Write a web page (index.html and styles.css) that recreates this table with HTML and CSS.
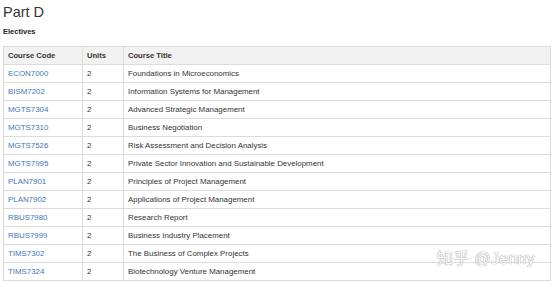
FILE: index.html
```html
<!DOCTYPE html>
<html>
<head>
<meta charset="utf-8">
<link rel="stylesheet" href="styles.css">
</head>
<body>
<div class="page">
  <h1 class="title">Part D</h1>
  <h2 class="subtitle">Electives</h2>
  <table class="courses">
    <thead>
      <tr><th class="c-code">Course Code</th><th class="c-units">Units</th><th>Course Title</th></tr>
    </thead>
    <tbody>
      <tr><td><a>ECON7000</a></td><td>2</td><td>Foundations in Microeconomics</td></tr>
      <tr><td><a>BISM7202</a></td><td>2</td><td>Information Systems for Management</td></tr>
      <tr><td><a>MGTS7304</a></td><td>2</td><td>Advanced Strategic Management</td></tr>
      <tr><td><a>MGTS7310</a></td><td>2</td><td>Business Negotiation</td></tr>
      <tr><td><a>MGTS7526</a></td><td>2</td><td>Risk Assessment and Decision Analysis</td></tr>
      <tr><td><a>MGTS7995</a></td><td>2</td><td>Private Sector Innovation and Sustainable Development</td></tr>
      <tr><td><a>PLAN7901</a></td><td>2</td><td>Principles of Project Management</td></tr>
      <tr><td><a>PLAN7902</a></td><td>2</td><td>Applications of Project Management</td></tr>
      <tr><td><a>RBUS7980</a></td><td>2</td><td>Research Report</td></tr>
      <tr><td><a>RBUS7999</a></td><td>2</td><td>Business Industry Placement</td></tr>
      <tr><td><a>TIMS7302</a></td><td>2</td><td>The Business of Complex Projects</td></tr>
      <tr><td><a>TIMS7324</a></td><td>2</td><td>Biotechnology Venture Management</td></tr>
    </tbody>
  </table>
  <div class="watermark">知乎 @Jenny</div>
</div>
</body>
</html>
```
FILE: styles.css
```css
html, body {
  margin: 0;
  padding: 0;
  background: #fff;
}
body {
  font-family: "Liberation Sans", Arial, "Noto Sans CJK SC", sans-serif;
  color: #333;
}
.page {
  position: relative;
  padding: 0 3px;
  width: 548px;
  height: 283px;
}
.title {
  margin: 0;
  padding-top: 2px;
  font-size: 14.5px;
  font-weight: normal;
  line-height: 20px;
  color: #333;
}
.subtitle {
  margin: 5px 0 0;
  font-size: 7.5px;
  font-weight: bold;
  line-height: 10px;
  color: #222;
}
.courses {
  margin-top: 9px;
  width: 548px;
  border-collapse: collapse;
  font-size: 7.9px;
  border: 1px solid #dcdcdc;
}
.courses th, .courses td {
  border: 1px solid #dcdcdc;
  border-left: none;
  border-right: none;
  text-align: left;
  padding: 0 0 0 4px;
  height: 17px;
  vertical-align: middle;
}
.courses th + th, .courses td + td {
  border-left: 1px solid #dcdcdc;
}
.courses th {
  background: #f2f2f2;
  font-weight: bold;
  color: #333;
  font-size: 7.6px;
}
.c-code { width: 74px; }
.c-units { width: 36px; }
.courses a {
  color: #3f78b8;
  text-decoration: none;
}
.watermark {
  position: absolute;
  left: 437px;
  top: 245px;
  font-size: 16px;
  color: #fff;
  letter-spacing: 0.3px;
  text-shadow: 0 0 1px #999, 0 0 1px #999;
  white-space: nowrap;
}
```
